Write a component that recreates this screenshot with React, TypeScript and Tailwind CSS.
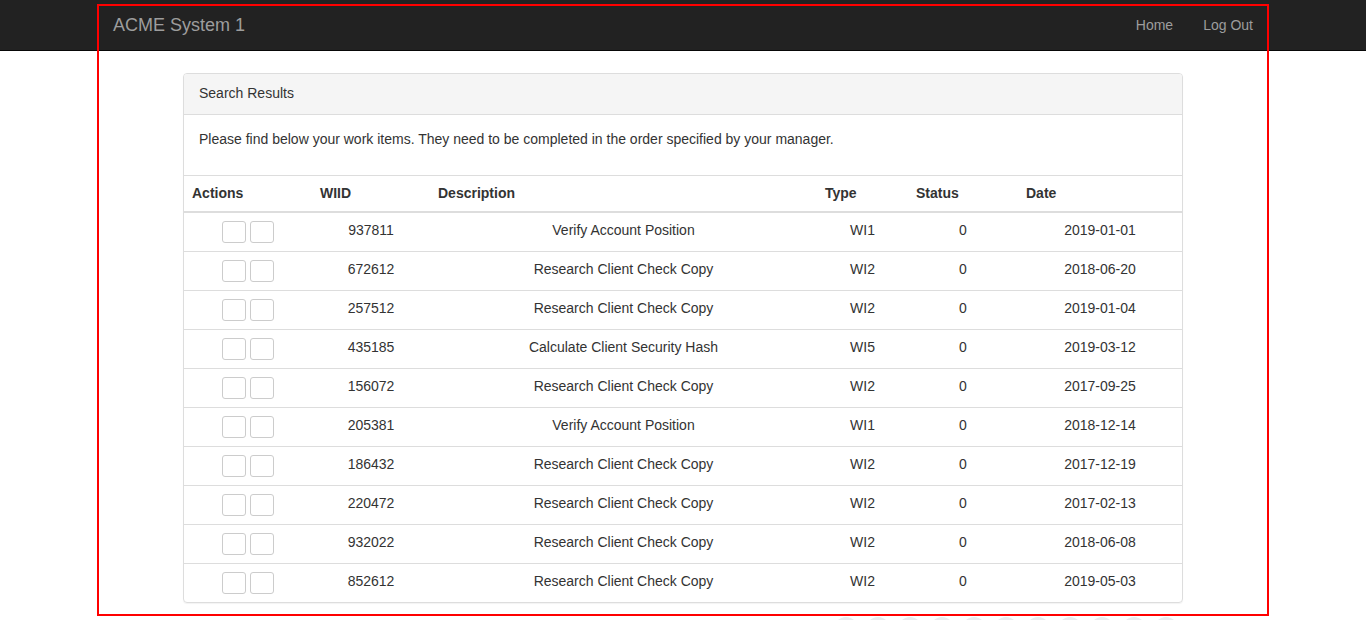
import React from 'react';

const items = [
  { wiid: '937811', description: 'Verify Account Position', type: 'WI1', status: '0', date: '2019-01-01' },
  { wiid: '672612', description: 'Research Client Check Copy', type: 'WI2', status: '0', date: '2018-06-20' },
  { wiid: '257512', description: 'Research Client Check Copy', type: 'WI2', status: '0', date: '2019-01-04' },
  { wiid: '435185', description: 'Calculate Client Security Hash', type: 'WI5', status: '0', date: '2019-03-12' },
  { wiid: '156072', description: 'Research Client Check Copy', type: 'WI2', status: '0', date: '2017-09-25' },
  { wiid: '205381', description: 'Verify Account Position', type: 'WI1', status: '0', date: '2018-12-14' },
  { wiid: '186432', description: 'Research Client Check Copy', type: 'WI2', status: '0', date: '2017-12-19' },
  { wiid: '220472', description: 'Research Client Check Copy', type: 'WI2', status: '0', date: '2017-02-13' },
  { wiid: '932022', description: 'Research Client Check Copy', type: 'WI2', status: '0', date: '2018-06-08' },
  { wiid: '852612', description: 'Research Client Check Copy', type: 'WI2', status: '0', date: '2019-05-03' },
];

const headers = ['Actions', 'WIID', 'Description', 'Type', 'Status', 'Date'];

function ActionButton() {
  return (
    <button
      type="button"
      className="w-[24px] h-[22px] bg-white border border-[#ccc] rounded-[3px] align-middle"
    />
  );
}

export default function App() {
  return (
    <div className="relative min-h-[620px] bg-white text-[14px] leading-[20px] text-[#333] font-['Liberation_Sans',Arial,sans-serif]">
      {/* navbar */}
      <nav className="h-[51px] bg-[#222] border-b border-[#080808]">
        <div className="w-[1170px] mx-auto px-[15px] flex items-center justify-between h-[50px]">
          <a className="text-[18px] leading-[20px] text-[#9d9d9d]">ACME System 1</a>
          <ul className="flex">
            <li>
              <a className="block px-[15px] text-[#9d9d9d]">Home</a>
            </li>
            <li>
              <a className="block pl-[15px] text-[#9d9d9d]">Log Out</a>
            </li>
          </ul>
        </div>
      </nav>

      {/* panel */}
      <div className="w-[1000px] mx-auto mt-[22px] border border-[#ddd] rounded-[4px] shadow-[0_1px_1px_rgba(0,0,0,0.05)]">
        <div className="bg-[#f5f5f5] border-b border-[#ddd] rounded-t-[3px] px-[15px] pt-[9px] pb-[11px]">
          Search Results
        </div>
        <div className="px-[15px] pt-[14px] pb-[16px]">
          <p className="mb-[10px]">
            Please find below your work items. They need to be completed in the order specified by your manager.
          </p>
        </div>
        <table className="w-full table-fixed border-collapse border-t border-[#ddd]">
          <colgroup>
            <col className="w-[128px]" />
            <col className="w-[118px]" />
            <col className="w-[387px]" />
            <col className="w-[91px]" />
            <col className="w-[110px]" />
            <col />
          </colgroup>
          <thead>
            <tr>
              {headers.map((h) => (
                <th key={h} className="text-left font-bold px-[8px] pt-[7px] pb-[8px] border-b-2 border-[#ddd]">
                  {h}
                </th>
              ))}
            </tr>
          </thead>
          <tbody>
            {items.map((it, i) => (
              <tr key={it.wiid} className={i > 0 ? 'border-t border-[#ddd]' : ''}>
                <td className="p-[8px] text-center align-top">
                  <div className="flex justify-center gap-[4px] h-[22px]">
                    <ActionButton />
                    <ActionButton />
                  </div>
                </td>
                <td className="px-[8px] pt-[7px] text-center align-top">{it.wiid}</td>
                <td className="px-[8px] pt-[7px] text-center align-top">{it.description}</td>
                <td className="px-[8px] pt-[7px] text-center align-top">{it.type}</td>
                <td className="px-[8px] pt-[7px] text-center align-top">{it.status}</td>
                <td className="px-[8px] pt-[7px] text-center align-top">{it.date}</td>
              </tr>
            ))}
          </tbody>
        </table>
      </div>

      {/* pagination dots peeking below */}
      <div className="w-[1000px] mx-auto flex justify-end gap-[8px] pr-[5px] mt-[14px]">
        {Array.from({ length: 11 }).map((_, i) => (
          <span key={i} className="w-[24px] h-[24px] rounded-full bg-[#e8ecee]" />
        ))}
      </div>

      {/* highlight frame */}
      <div className="absolute left-[97px] top-[4px] w-[1172px] h-[612px] border-2 border-[#f00] pointer-events-none" />
    </div>
  );
}
